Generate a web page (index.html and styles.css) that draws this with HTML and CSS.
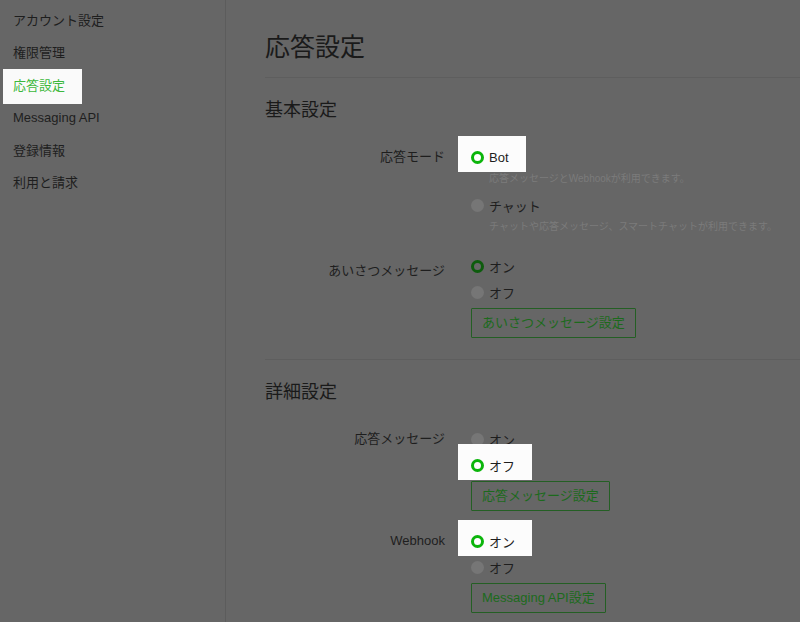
FILE: index.html
```html
<!DOCTYPE html>
<html lang="ja">
<head>
<meta charset="utf-8">
<title>応答設定</title>
<link rel="stylesheet" href="styles.css">
</head>
<body>
<div class="app">
  <nav class="sidebar">
    <a class="nav-item">アカウント設定</a>
    <a class="nav-item">権限管理</a>
    <a class="nav-item active">応答設定</a>
    <a class="nav-item">Messaging API</a>
    <a class="nav-item">登録情報</a>
    <a class="nav-item">利用と請求</a>
  </nav>
  <main class="main">
    <h1 class="page-title">応答設定</h1>

    <section class="section">
      <h2 class="section-title">基本設定</h2>
      <div class="form">
        <div class="label">応答モード</div>
        <div class="field">
          <div class="opt hl"><span class="radio on-hl"></span><span>Bot</span></div>
          <div class="desc">応答メッセージとWebhookが利用できます。</div>
          <div class="opt"><span class="radio off"></span><span>チャット</span></div>
          <div class="desc">チャットや応答メッセージ、スマートチャットが利用できます。</div>
        </div>

        <div class="label label-low">あいさつメッセージ</div>
        <div class="field">
          <div class="opt"><span class="radio on"></span><span>オン</span></div>
          <div class="opt"><span class="radio off"></span><span>オフ</span></div>
          <button class="btn">あいさつメッセージ設定</button>
        </div>
      </div>
    </section>

    <section class="section last">
      <h2 class="section-title">詳細設定</h2>
      <div class="form">
        <div class="label">応答メッセージ</div>
        <div class="field">
          <div class="opt"><span class="radio off"></span><span>オン</span></div>
          <div class="opt hl"><span class="radio on-hl"></span><span>オフ</span></div>
          <button class="btn">応答メッセージ設定</button>
        </div>

        <div class="label">Webhook</div>
        <div class="field">
          <div class="opt hl"><span class="radio on-hl"></span><span>オン</span></div>
          <div class="opt"><span class="radio off"></span><span>オフ</span></div>
          <button class="btn">Messaging API設定</button>
        </div>
      </div>
    </section>
  </main>
</div>
</body>
</html>
```

FILE: styles.css
```css
* { box-sizing: border-box; }

html, body {
  margin: 0;
  padding: 0;
  height: 100%;
}

body {
  background: #666666;
  color: #1e1e1e;
  font-family: "Liberation Sans", "Noto Sans CJK JP", sans-serif;
  font-size: 13px;
  overflow: hidden;
}

.app {
  display: flex;
  height: 622px;
}

/* Sidebar */
.sidebar {
  width: 226px;
  flex: none;
  border-right: 1px solid #5c5c5c;
  padding-top: 5px;
  display: flex;
  flex-direction: column;
}

.nav-item {
  display: block;
  width: fit-content;
  height: 32.4px;
  line-height: 32.4px;
  padding-left: 13px;
  color: #1e1e1e;
  position: relative;
  z-index: 0;
}

.nav-item.active {
  color: #3cb83c;
}

.nav-item.active::before {
  content: "";
  position: absolute;
  top: -1px;
  bottom: -2px;
  left: 3px;
  right: -17px;
  background: #fafafa;
  z-index: -1;
}

/* Main */
.main {
  flex: 1;
  padding: 31px 0 0 39px;
}

.page-title {
  margin: 0;
  font-size: 25px;
  font-weight: normal;
  line-height: 32px;
  color: #1a1a1a;
  padding-bottom: 14px;
  border-bottom: 1px solid #5e5e5e;
}

.section {
  padding-bottom: 21px;
  border-bottom: 1px solid #5e5e5e;
}

.section.last {
  border-bottom: none;
}

.section-title {
  margin: 19px 0 0;
  font-size: 18px;
  font-weight: normal;
  line-height: 26px;
  color: #1a1a1a;
}

.form {
  margin-top: 21px;
  display: grid;
  grid-template-columns: 180px 1fr;
  column-gap: 26px;
  row-gap: 17px;
}

.label {
  text-align: right;
  line-height: 26px;
  color: #1e1e1e;
}

.label-low {
  padding-top: 5px;
}

.field {
  display: flex;
  flex-direction: column;
  align-items: flex-start;
}

.opt {
  display: flex;
  align-items: center;
  gap: 5px;
  height: 26px;
  width: fit-content;
  position: relative;
  z-index: 0;
  color: #1e1e1e;
}

.opt.hl::before {
  content: "";
  position: absolute;
  top: -8px;
  bottom: -2px;
  left: -13px;
  right: -17px;
  background: #fcfcfc;
  z-index: -1;
}

.radio {
  width: 13px;
  height: 13px;
  border-radius: 50%;
  flex: none;
}

.radio.off {
  background: #767676;
}

.radio.on {
  border: 3.5px solid #0d5c0d;
  background: #676767;
}

.radio.on-hl {
  border: 3.5px solid #0bb50b;
  background: #ffffff;
}

.desc {
  font-size: 10px;
  line-height: 18px;
  color: #7b7b7b;
  margin-bottom: 4px;
  padding-left: 18px;
}

.desc:last-child {
  margin-bottom: 0;
}

.btn {
  margin-top: 3px;
  height: 30px;
  padding: 0 10px;
  background: transparent;
  border: 1px solid #245f24;
  border-radius: 1px;
  color: #1c6a1c;
  font-family: "Liberation Sans", "Noto Sans CJK JP", sans-serif;
  font-size: 13px;
  line-height: 28px;
}
```
